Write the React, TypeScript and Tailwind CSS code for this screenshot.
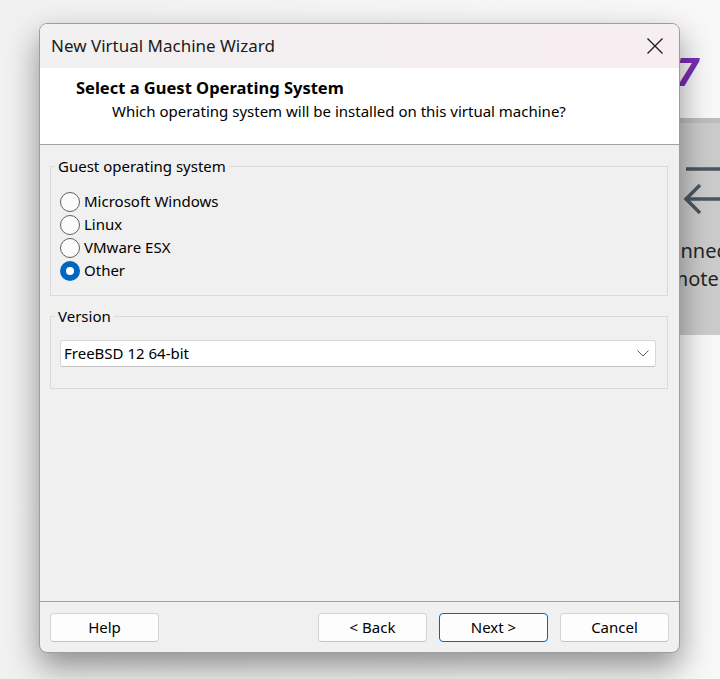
import React, { useState } from "react";

const osOptions = ["Microsoft Windows", "Linux", "VMware ESX", "Other"];

const Radio = ({ checked }: { checked: boolean }) =>
  checked ? (
    <span className="flex h-[20px] w-[20px] items-center justify-center rounded-full bg-[#0067c0]">
      <span className="h-[8px] w-[8px] rounded-full bg-white" />
    </span>
  ) : (
    <span className="h-[20px] w-[20px] rounded-full border border-[#616161] bg-[#fbfbfb]" />
  );

const Button = ({ label, primary }: { label: string; primary?: boolean }) => (
  <button
    className={
      primary
        ? "h-[29px] w-[109px] rounded-[4px] border border-[#0067c0] bg-[#fdfdfd] text-[15px] text-black"
        : "h-[29px] w-[109px] rounded-[4px] border border-[#d4d4d4] border-b-[#c4c4c4] bg-[#fdfdfd] text-[15px] text-black"
    }
  >
    {label}
  </button>
);

export default function App() {
  const [os, setOs] = useState("Other");

  return (
    <div className="relative h-[679px] w-[720px] overflow-hidden bg-gradient-to-r from-[#f1f1f1] to-[#f8f8f8] font-['Noto_Sans',sans-serif]">
      {/* app behind the dialog */}
      <div className="absolute left-[558px] top-[51px] w-[140px] text-right text-[40px] font-bold italic leading-none text-[#7b2db5]">
        Pro 17
      </div>
      <div className="absolute left-[600px] top-[118px] flex h-[217px] w-[216px] flex-col items-center border-t-[5px] border-[#bdbdbd] bg-[#cbcbcb]">
        <svg width="64" height="60" viewBox="0 0 64 60" className="mt-[37px]">
          <path d="M10 9 H64" stroke="#4a5661" strokeWidth="3.5" />
          <path d="M10 39 H64" stroke="#4a5661" strokeWidth="3.5" />
          <path d="M24 25 L10 39 L24 53" stroke="#4a5661" strokeWidth="3.5" fill="none" />
        </svg>
        <div className="ml-[14px] mt-[17px] whitespace-nowrap text-center text-[20px] leading-[28px] text-[#262626]">
          Connect to a
          <br />
          Remote Server
        </div>
      </div>

      {/* wizard window */}
      <div className="absolute left-[39px] top-[23px] flex h-[630px] w-[641px] flex-col overflow-hidden rounded-[8px] border border-[#9d9d9d] bg-[#f0f0f0] shadow-[0_14px_32px_rgba(0,0,0,0.42)]">
        <div className="flex h-[44px] shrink-0 items-center justify-between bg-gradient-to-r from-[#f2f0f1] to-[#f7eef1] pl-[11px] pr-[15px]">
          <span className="text-[17px] text-[#1b1b1b]">New Virtual Machine Wizard</span>
          <svg width="18" height="18" viewBox="0 0 18 18">
            <path d="M1.5 1.5 L16.5 16.5 M16.5 1.5 L1.5 16.5" stroke="#1b1b1b" strokeWidth="1.3" />
          </svg>
        </div>

        <div className="h-[77px] shrink-0 border-b border-[#a0a0a0] bg-white pt-[10px]">
          <div className="pl-[36px] text-[16.5px] font-bold leading-[20px] text-black">
            Select a Guest Operating System
          </div>
          <div className="mt-[3px] pl-[72px] text-[15px] leading-[20px] text-black">
            Which operating system will be installed on this virtual machine?
          </div>
        </div>

        <div className="flex-1 pl-[10px] pr-[11px] pt-[11px] text-[15px] text-black">
          <fieldset className="border border-[#dadada] pb-[13px]">
            <legend className="ml-[4px] px-[3px] leading-[20px]">Guest operating system</legend>
            <div className="mt-[14px] flex flex-col pl-[9px]">
              {osOptions.map((name) => (
                <label
                  key={name}
                  className="flex h-[23px] cursor-default items-center gap-[4px]"
                  onClick={() => setOs(name)}
                >
                  <Radio checked={os === name} />
                  <span>{name}</span>
                </label>
              ))}
            </div>
          </fieldset>

          <fieldset className="mt-[10px] border border-[#dadada] pb-[21px]">
            <legend className="ml-[4px] px-[3px] leading-[20px]">Version</legend>
            <div className="ml-[9px] mr-[11px] mt-[14px] flex h-[27px] items-center justify-between rounded-[3px] border border-[#d9d9d9] border-b-[#c2c2c2] bg-white pl-[3px] pr-[6px]">
              <span>FreeBSD 12 64-bit</span>
              <svg width="12" height="7" viewBox="0 0 12 7">
                <path d="M0.5 0.5 L6 6 L11.5 0.5" stroke="#5c5c5c" strokeWidth="1" fill="none" />
              </svg>
            </div>
          </fieldset>
        </div>

        <div className="flex h-[51px] shrink-0 items-start justify-between border-t border-[#a0a0a0] px-[10px] pt-[11px]">
          <Button label="Help" />
          <div className="flex gap-[12px]">
            <Button label="< Back" />
            <Button label="Next >" primary />
            <Button label="Cancel" />
          </div>
        </div>
      </div>
    </div>
  );
}
